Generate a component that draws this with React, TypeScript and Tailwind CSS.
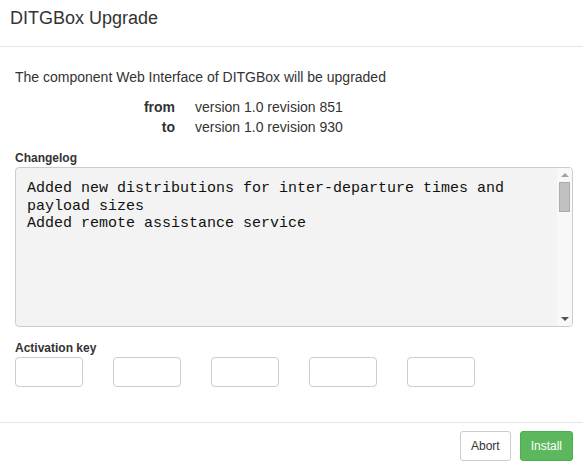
export default function App() {
  const keys = [0, 1, 2, 3, 4];

  return (
    <div className="w-[583px] h-[465px] bg-white text-[#333] font-['Liberation_Sans',Arial,sans-serif] text-[14px] leading-[20px] overflow-hidden">
      {/* Header */}
      <div className="h-[47px] border-b border-[#e5e5e5] px-[10px] pt-[5px]">
        <h4 className="text-[18px] leading-[26px]">DITGBox Upgrade</h4>
      </div>

      {/* Body */}
      <div className="pl-[15px] pr-[10px] pt-[20px] h-[375px]">
        <p>The component Web Interface of DITGBox will be upgraded</p>

        <div className="grid grid-cols-[160px_1fr] gap-x-[20px] mt-[10px]">
          <span className="text-right font-bold">from</span>
          <span>version 1.0 revision 851</span>
          <span className="text-right font-bold">to</span>
          <span>version 1.0 revision 930</span>
        </div>

        <label className="block mt-[13px] text-[12px] leading-[17px] font-bold">Changelog</label>
        <div className="flex h-[160px] border border-[#ccc] rounded-[4px] bg-[#f3f3f3] overflow-hidden">
          <div className="flex-1 pl-[11px] pr-[8px] pt-[12px] font-['Liberation_Mono','Courier_New',monospace] text-[15px] leading-[17.5px] text-[#111] whitespace-pre-wrap">
            {"Added new distributions for inter-departure times and\npayload sizes\nAdded remote assistance service"}
          </div>
          {/* scrollbar */}
          <div className="w-[15px] bg-[#f8f8f8] flex flex-col items-center">
            <div className="h-[14px] flex items-center justify-center">
              <div className="w-0 h-0 border-l-[4px] border-r-[4px] border-b-[4px] border-l-transparent border-r-transparent border-b-[#a3a3a3]" />
            </div>
            <div className="w-[11px] h-[30px] bg-[#c1c1c1] border border-[#acacac]" />
            <div className="flex-1" />
            <div className="h-[14px] flex items-center justify-center">
              <div className="w-0 h-0 border-l-[4px] border-r-[4px] border-t-[4px] border-l-transparent border-r-transparent border-t-[#505050]" />
            </div>
          </div>
        </div>

        <label className="block mt-[13px] text-[12px] leading-[17px] font-bold">Activation key</label>
        <div className="flex gap-[30px]">
          {keys.map((k) => (
            <input
              key={k}
              type="text"
              className="w-[68px] h-[30px] border border-[#ccc] rounded-[4px] bg-white px-2 text-[12px] outline-none"
            />
          ))}
        </div>
      </div>

      {/* Footer */}
      <div className="border-t border-[#e5e5e5] flex justify-end gap-[9px] pr-[10px] pt-[8px]">
        <button className="h-[30px] px-[10px] border border-[#ccc] rounded-[3px] bg-white text-[12px] text-[#333]">
          Abort
        </button>
        <button className="h-[30px] px-[10px] border border-[#4cae4c] rounded-[3px] bg-[#5cb85c] text-[12px] text-white">
          Install
        </button>
      </div>
    </div>
  );
}
